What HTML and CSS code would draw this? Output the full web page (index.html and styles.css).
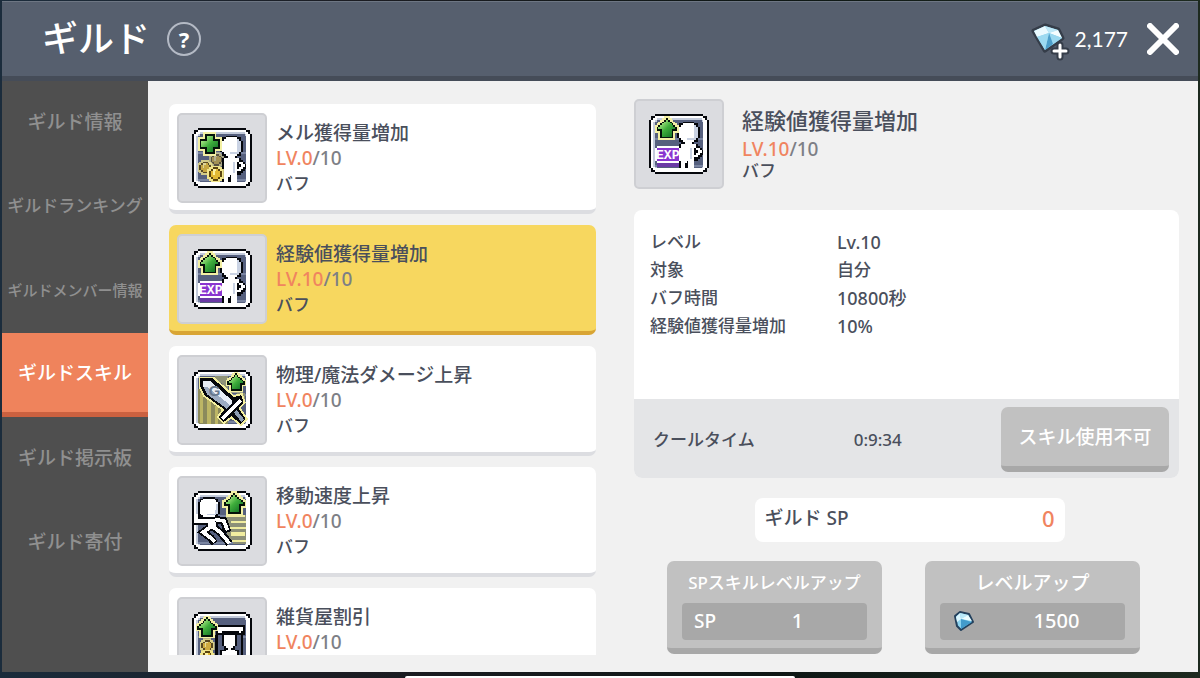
FILE: index.html
```html
<!DOCTYPE html>
<html lang="ja">
<head>
<meta charset="utf-8">
<meta name="viewport" content="width=device-width, initial-scale=1">
<title>ギルド</title>
<link rel="stylesheet" href="styles.css">
</head>
<body>
<svg class="defs" aria-hidden="true">
  <defs>
    <linearGradient id="green" x1="0" y1="0" x2="1" y2="1">
      <stop offset="0.2" stop-color="#9be07a"/><stop offset="0.5" stop-color="#3fae3c"/><stop offset="1" stop-color="#0d6a22"/>
    </linearGradient>
    <symbol id="frame" viewBox="0 0 32 32">
      <path fill="#05070c" d="M3 0H29V1H31V3H32V29H31V31H29V32H3V31H1V29H0V3H1V1H3Z"/>
      <path fill="#fff" d="M3 1H29V2H30V3H31V29H30V30H29V31H3V30H2V29H1V3H2V2H3Z"/>
      <path fill="#c3cbdb" d="M4 2H28V3H29V4H30V28H29V29H28V30H4V29H3V28H2V4H3V3H4Z"/>
      <path fill="#fff" d="M4 29H28V30H4ZM29 4H30V28H29Z"/>
      <path fill="#56607e" d="M4 3H28V4H29V28H28V29H4V28H3V4H4Z"/>
      <path fill="#7984a1" d="M3 13H29V14H3ZM3 27H29V28H3Z"/>
    </symbol>
    <symbol id="hero" viewBox="0 0 32 32">
      <path fill="#05070c" d="M18 4H24V5H26V7H27V13H26V15H24V16H26V17H27V18H28V19H29V22H28V23H27V24H26V25H24V29H16V16H17V15H16V13H15V7H16V5H18Z"/>
      <path fill="#fff" d="M18 5H24V6H25V7H26V13H25V14H24V15H23V16H25V18H27V19H28V21H27V22H26V23H24V29H17V16H19V15H18V14H17V13H16V7H17V6H18Z"/>
      <path fill="#c9d2e3" d="M24 6H25V7H26V13H25V14H20V13H24ZM22 18H23V24H22Z"/>
      <path fill="#05070c" d="M24 18H25V19H26V21H25V22H24ZM20 25H21V29H19V26H20Z"/>
    </symbol>
    <symbol id="arrow" viewBox="0 0 13 13">
      <path fill="#f3f0a4" d="M5 0H8V1H9V2H10V3H11V4H12V5H13V9H11V13H2V9H0V5H1V4H2V3H3V2H4V1H5Z"/>
      <path fill="#05120a" d="M6 1H7V2H8V3H9V4H10V5H11V6H12V8H10V12H3V8H1V6H2V5H3V4H4V3H5V2H6Z"/>
      <path fill="url(#green)" d="M6 2H7V3H8V4H9V5H10V6H11V7H9V11H4V7H2V6H3V5H4V4H5V3H6Z"/>
    </symbol>
    <symbol id="coin" viewBox="0 0 9 9">
      <path fill="#f1e58b" d="M2 0H7V1H8V2H9V7H8V8H7V9H2V8H1V7H0V2H1V1H2Z"/>
      <path fill="#5a4410" d="M3 1H6V2H7V3H8V6H7V7H6V8H3V7H2V6H1V3H2V2H3Z"/>
      <path fill="#e3b935" d="M3 2H6V3H7V6H6V7H3V6H2V3H3Z"/>
      <path fill="#fff2a0" d="M3 2H5V3H4V5H3Z"/>
    </symbol>
    <symbol id="icon-meso" viewBox="0 0 32 32">
      <use href="#frame" width="32" height="32"/>
      <g opacity="0.55"><use href="#coin" x="9" y="13" width="8" height="8"/></g>
      <g opacity="0.8"><use href="#coin" x="3" y="17" width="8" height="8"/></g>
      <use href="#hero" width="32" height="32"/>
      <use href="#coin" x="8" y="20" width="9" height="9"/>
      <path fill="#f3f0a4" d="M6 2H13V5H16V12H13V15H6V12H3V5H6Z"/>
      <path fill="#05120a" d="M7 3H12V6H15V11H12V14H7V11H4V6H7Z"/>
      <path fill="url(#green)" d="M8 4H11V7H14V10H11V13H8V10H5V7H8Z"/>
    </symbol>
    <symbol id="icon-exp" viewBox="0 0 32 32">
      <use href="#frame" width="32" height="32"/>
      <use href="#hero" width="32" height="32"/>
      <use href="#arrow" x="3" y="1" width="13" height="13"/>
      <path fill="#6b3ba6" d="M4 26H16V28H4Z"/>
      <path fill="#fff" d="M4 17H16V18H17V25H16V26H4V25H3V18H4Z"/>
      <path fill="#8a35d0" d="M4 18H16V25H4Z"/>
      <text class="exp-text" x="10" y="24" text-anchor="middle">EXP</text>
    </symbol>
    <symbol id="icon-sword" viewBox="0 0 32 32">
      <use href="#frame" width="32" height="32"/>
      <path fill="#8b8a5c" d="M3 10H5L19 24V29H4L3 28Z"/>
      <path fill="#bdb665" d="M4 12H6V28H4ZM8 15H10V29H8ZM12 19H14V29H12Z"/>
      <path fill="#8f9377" d="M12 3H19V11H16V7H12ZM24 12H28V16H24Z"/>
      <path fill="#05070c" stroke="#f3efa0" stroke-width="3" d="M5 5H11L22 15L26 14L27 17L24 20L28 26L26 28L21 24L17 27L15 25L18 21L7 13L5 9Z"/>
      <path fill="#05070c" stroke="#05070c" stroke-width="1" d="M5 5H11L22 15L26 14L27 17L24 20L28 26L26 28L21 24L17 27L15 25L18 21L7 13L5 9Z"/>
      <path fill="#e8eef6" d="M6 6H10L21 16L22 20L19 21L8 13L6 9Z"/>
      <path fill="#9dacc2" d="M6 9L8 9L22 20L19 21L8 13Z"/>
      <path stroke="#05070c" stroke-width="4" d="M16 26L26 16"/>
      <path stroke="#fff" stroke-width="2" d="M16 26L26 16"/>
      <path stroke="#8c9cb2" stroke-width="2" d="M23 22L27 27"/>
      <text class="g-text" x="12" y="14" text-anchor="middle">G</text>
      <use href="#arrow" x="18" y="1" width="11" height="11"/>
    </symbol>
    <symbol id="icon-speed" viewBox="0 0 32 32">
      <use href="#frame" width="32" height="32"/>
      <path fill="#8d9078" d="M18 13H29V28H22L18 22Z"/>
      <path fill="#f1eda0" d="M18 13H28V14H18ZM21 16H29V17H21ZM20 19H29V20H20ZM21 22H28V24H21ZM20 26H29V27H20Z"/>
      <g fill="none" stroke="#05070c" stroke-width="4">
        <path d="M9 16H2V12M11 15L17 16L19 22M10 19L6 22L10 25L12 28M11 19L15 22L20 28"/>
        <path stroke-width="6" d="M10 13L11 20"/>
      </g>
      <g fill="none" stroke="#fff" stroke-width="2">
        <path d="M9 16H2V12M11 15L17 16L19 21M10 19L6 22L10 25L12 27M11 19L15 22L20 28"/>
        <path stroke-width="4" d="M10 13L11 20"/>
      </g>
      <path fill="#05070c" d="M6 3H12V4H14V6H15V12H14V14H12V15H6V14H4V12H3V6H4V4H6Z"/>
      <path fill="#fff" d="M6 4H12V5H13V6H14V12H13V13H12V14H6V13H5V12H4V6H5V5H6Z"/>
      <path fill="#c5cee0" d="M13 7H14V12H13V13H8V12H12V10H13Z"/>
      <use href="#arrow" x="16" y="0" width="13" height="13"/>
    </symbol>
    <symbol id="icon-shop" viewBox="0 0 32 32">
      <use href="#frame" width="32" height="32"/>
      <path fill="#05070c" d="M13 7H28V12H27V29H12V12H13Z"/>
      <path fill="#fff" d="M14 8H27V10H26V11H25V10H16V11H14Z"/>
      <path fill="#56607e" d="M14 12H26V28H14Z"/>
      <path fill="#05070c" d="M17 11H23V12H24V18H23V20H25V28H15V20H17V18H16V12H17Z"/>
      <path fill="#fff" d="M17 12H23V18H22V19H21V20H23V21H24V28H16V21H18V20H19V19H18V18H17Z"/>
      <use href="#arrow" x="2" y="2" width="12" height="12"/>
      <g opacity="0.85"><use href="#coin" x="4" y="14" width="8" height="8"/></g>
      <use href="#coin" x="4" y="20" width="8" height="8"/>
    </symbol>
  </defs>
</svg>

<div class="window">
  <header class="topbar">
    <h1 class="topbar-title">ギルド</h1>
    <button class="help" type="button" aria-label="ヘルプ">?</button>
    <button class="currency" type="button">
      <svg class="currency-icon" viewBox="0 0 40 38" aria-hidden="true">
        <path fill="#353d49" stroke="#353d49" stroke-width="5" stroke-linejoin="round" d="M2 11L13 6L26 10L30 18L13 30Z"/>
        <path fill="#86cdea" d="M2 11L13 6L26 10L30 18L13 30Z"/>
        <path fill="#eafaff" d="M2 11L13 6L17 13L5 17Z"/>
        <path fill="#bfe9f8" d="M13 6L26 10L17 13Z"/>
        <path fill="#f6feff" d="M26 10L30 18L17 13Z"/>
        <path fill="#9bd9f0" d="M17 13L30 18L20 25Z"/>
        <path fill="#4d9fca" d="M17 13L21 24L13 30Z"/>
        <path fill="#9cdaf1" d="M5 17L17 13L13 30Z"/>
        <path d="M28 25v12M22 31h12" stroke="#353d49" stroke-width="7" stroke-linecap="round"/>
        <path d="M28 25v12M22 31h12" stroke="#fff" stroke-width="3" stroke-linecap="round"/>
      </svg>
      <span>2,177</span>
    </button>
    <button class="close" type="button" aria-label="閉じる">
      <svg class="close-icon" viewBox="0 0 32 32" aria-hidden="true"><path d="M3 3l26 26M29 3L3 29" stroke="#fff" stroke-width="6" stroke-linecap="round"/></svg>
    </button>
  </header>

  <div class="body">
    <nav class="sidebar">
      <a class="tab" href="#info">ギルド情報</a>
      <a class="tab tab-long" href="#ranking">ギルドランキング</a>
      <a class="tab tab-longer" href="#members">ギルドメンバー情報</a>
      <a class="tab tab-active" href="#skills" aria-current="page">ギルドスキル</a>
      <a class="tab" href="#board">ギルド掲示板</a>
      <a class="tab" href="#donate">ギルド寄付</a>
    </nav>

    <main class="content">
      <div class="skill-list">
        <button class="skill" type="button">
          <span class="tile"><svg class="pixel"><use href="#icon-meso"/></svg></span>
          <span class="skill-text"><span class="skill-name">メル獲得量増加</span><span class="level"><b>LV.0</b>/10</span><span class="kind">バフ</span></span>
        </button>
        <button class="skill skill-selected" type="button">
          <span class="tile"><svg class="pixel"><use href="#icon-exp"/></svg></span>
          <span class="skill-text"><span class="skill-name">経験値獲得量増加</span><span class="level"><b>LV.10</b>/10</span><span class="kind">バフ</span></span>
        </button>
        <button class="skill" type="button">
          <span class="tile"><svg class="pixel"><use href="#icon-sword"/></svg></span>
          <span class="skill-text"><span class="skill-name">物理/魔法ダメージ上昇</span><span class="level"><b>LV.0</b>/10</span><span class="kind">バフ</span></span>
        </button>
        <button class="skill" type="button">
          <span class="tile"><svg class="pixel"><use href="#icon-speed"/></svg></span>
          <span class="skill-text"><span class="skill-name">移動速度上昇</span><span class="level"><b>LV.0</b>/10</span><span class="kind">バフ</span></span>
        </button>
        <button class="skill" type="button">
          <span class="tile"><svg class="pixel"><use href="#icon-shop"/></svg></span>
          <span class="skill-text"><span class="skill-name">雑貨屋割引</span><span class="level"><b>LV.0</b>/10</span></span>
        </button>
      </div>

      <section class="detail">
        <div class="detail-head">
          <span class="tile"><svg class="pixel"><use href="#icon-exp"/></svg></span>
          <div class="detail-text">
            <h2 class="detail-name">経験値獲得量増加</h2>
            <span class="level"><b>LV.10</b>/10</span>
            <span class="kind">バフ</span>
          </div>
        </div>

        <div class="card">
          <dl class="stats">
            <dt>レベル</dt><dd class="stat-number">Lv.10</dd>
            <dt>対象</dt><dd>自分</dd>
            <dt>バフ時間</dt><dd class="stat-number">10800秒</dd>
            <dt>経験値獲得量増加</dt><dd class="stat-number">10%</dd>
          </dl>
          <div class="cooldown">
            <span>クールタイム</span>
            <span class="cooldown-time">0:9:34</span>
            <button class="gray-button use-button" type="button">スキル使用不可</button>
          </div>
        </div>

        <div class="guild-sp"><span>ギルド SP</span><span class="guild-sp-value">0</span></div>

        <div class="actions">
          <button class="gray-button action" type="button">
            <span class="action-label action-label-long">SPスキルレベルアップ</span>
            <span class="cost"><span>SP</span><span class="cost-value">1</span></span>
          </button>
          <button class="gray-button action" type="button">
            <span class="action-label">レベルアップ</span>
            <span class="cost">
              <svg class="cost-icon" viewBox="0 0 24 22" aria-hidden="true">
                <path fill="#8bd3f0" stroke="#23405c" stroke-width="2" stroke-linejoin="round" d="M3 6l5-4 9 2 4 8-12 8-4-4z"/>
                <path fill="#dcf7ff" d="M4 7l4-4 1 6-4 3z"/>
                <path fill="#b9eafa" d="M8 3l8 2-7 4z"/>
                <path fill="#eafcff" d="M16 5l4 6-11-2z"/>
                <path fill="#429bcb" d="M9 9l11 3-11 7z"/>
              </svg>
              <span class="cost-value">1500</span>
            </span>
          </button>
        </div>
      </section>
    </main>
  </div>
</div>
<div class="home-indicator"></div>
</body>
</html>
```
FILE: styles.css
```css
* {
  box-sizing: border-box;
}

body {
  margin: 0;
  height: 100vh;
  padding: 1px 2px 6px;
  display: flex;
  flex-direction: column;
  overflow: hidden;
  background: linear-gradient(90deg, #1b2c3c, #1b1c22 30%, #0e1715 65%, #1d2a1f);
  color: #4a4f5c;
  font: 500 17px/28px "Noto Sans", "Noto Sans CJK JP", sans-serif;
}

button {
  margin: 0;
  padding: 0;
  border: 0;
  background: none;
  color: inherit;
  font: inherit;
  cursor: pointer;
}

b {
  font-weight: inherit;
}

.defs {
  position: absolute;
  width: 0;
  height: 0;
}

.window {
  flex: 1;
  min-height: 0;
  display: flex;
  flex-direction: column;
  background: #f1f1f1;
}

/* Top bar */
.topbar {
  height: 80px;
  flex: none;
  display: flex;
  align-items: center;
  padding: 0 19px 0 40px;
  border-top: 1px solid #6d7683;
  border-bottom: 5px solid #454c58;
  background: #565f6e;
  color: #fff;
}

.topbar-title {
  margin: 0;
  font-size: 36px;
  line-height: 48px;
  font-weight: 500;
}

.help {
  width: 34px;
  height: 34px;
  margin-left: 17px;
  border: 2px solid #b4bac5;
  border-radius: 50%;
  font-size: 22px;
  line-height: 28px;
  font-weight: 700;
}

.currency {
  margin-left: auto;
  display: flex;
  align-items: center;
  gap: 3px;
  font: 21px/32px Lato, sans-serif;
}

.currency-icon {
  width: 40px;
  height: 38px;
  fill: none;
  overflow: visible;
}

.close {
  display: flex;
  margin-left: 19px;
}

.close-icon {
  width: 32px;
  height: 32px;
}

/* Side navigation */
.body {
  flex: 1;
  min-height: 0;
  display: flex;
}

.sidebar {
  width: 146px;
  flex: none;
  background: #4f4f4f;
}

.tab {
  height: 84px;
  display: flex;
  align-items: center;
  justify-content: center;
  padding-bottom: 2px;
  color: #909090;
  font-size: 19px;
  text-decoration: none;
  white-space: nowrap;
}

.tab-long {
  font-size: 17px;
}

.tab-longer {
  font-size: 15px;
}

.tab-active {
  padding-bottom: 0;
  border-bottom: 5px solid #cb6140;
  background: #ef835c;
  color: #fff;
}

/* Skill list */
.content {
  flex: 1;
  min-width: 0;
  display: grid;
  grid-template-columns: minmax(0, 427fr) minmax(0, 545fr);
  grid-template-rows: minmax(0, 1fr);
  gap: 38px;
  padding: 18px 19px 17px 21px;
}

.skill-list {
  margin-top: 5px;
  display: flex;
  flex-direction: column;
  gap: 11px;
  overflow: hidden;
}

.skill {
  flex: none;
  height: 110px;
  display: flex;
  align-items: center;
  gap: 9px;
  padding: 2px 8px 0;
  border-bottom: 4px solid #dcdde1;
  border-radius: 7px;
  background: #fff;
  text-align: left;
}

.skill-selected {
  border-bottom-color: #d9a534;
  background: #f7d75f;
}

.tile {
  width: 90px;
  height: 90px;
  flex: none;
  display: grid;
  place-items: center;
  border: 2px solid #cecfd3;
  border-radius: 5px;
  background: #dbdce0;
}

.pixel {
  width: 60px;
  height: 60px;
  shape-rendering: crispEdges;
}

.exp-text {
  fill: #fff;
  font: 700 7px "Liberation Mono", monospace;
}

.g-text {
  fill: #66788f;
  font: 700 8px "Liberation Sans", sans-serif;
}

.skill-text {
  height: 75px;
  display: flex;
  flex-direction: column;
  line-height: 25px;
}

.skill-name {
  font-size: 19px;
}

.level {
  color: #7d7f86;
  font-size: 19px;
}

.level b {
  color: #f0845f;
}

.kind {
  font-size: 17px;
}

/* Skill detail */
.detail {
  display: flex;
  flex-direction: column;
}

.detail-head {
  display: flex;
  gap: 18px;
}

.detail-text {
  display: flex;
  flex-direction: column;
  padding-top: 6px;
  line-height: 21px;
}

.detail-name {
  margin: 0 0 4px;
  font-size: 22px;
  line-height: 30px;
  font-weight: 500;
}

.card {
  margin-top: 21px;
  border-radius: 8px;
  background: #fff;
  overflow: hidden;
}

.stats {
  min-height: 189px;
  margin: 0;
  padding: 18px 16px;
  display: grid;
  grid-template-columns: 187px 1fr;
  align-content: start;
}

.stats dd {
  margin: 0;
}

.stats .stat-number {
  font-size: 18px;
}

.cooldown {
  height: 79px;
  display: flex;
  align-items: center;
  padding: 2px 10px 0 19px;
  background: #e4e5e7;
}

.cooldown-time {
  margin-left: 99px;
}

.gray-button {
  border-bottom: 6px solid #a8a8a8;
  border-radius: 7px;
  background: #c1c1c1;
  color: #fff;
}

.use-button {
  width: 168px;
  height: 65px;
  margin-left: auto;
  font-size: 19px;
}

.guild-sp {
  width: 310px;
  height: 44px;
  margin: 20px 0 0 6px;
  align-self: center;
  display: flex;
  align-items: center;
  justify-content: space-between;
  padding: 0 10px 4px;
  border-radius: 8px;
  background: #fff;
  font-size: 19px;
}

.guild-sp-value {
  color: #f0845f;
  font-size: 22px;
}

.actions {
  margin-top: 19px;
  padding-right: 6px;
  display: flex;
  justify-content: center;
  gap: 43px;
}

.action {
  width: 215px;
  height: 93px;
  display: flex;
  flex-direction: column;
  padding: 8px 15px;
}

.action-label {
  height: 34px;
  align-self: center;
  font-size: 19px;
}

.action-label-long {
  font-size: 17px;
}

.cost {
  align-self: stretch;
  height: 37px;
  display: flex;
  align-items: center;
  padding: 0 12px 2px;
  border-radius: 4px;
  background: #a8a8a8;
  font-size: 19px;
}

.cost-value {
  flex: 1;
  padding-left: 24px;
  font-size: 20px;
}

.cost-icon {
  width: 24px;
  height: 22px;
}

.home-indicator {
  position: absolute;
  left: 50%;
  bottom: 0;
  width: 390px;
  height: 2px;
  transform: translateX(-50%);
  border-radius: 4px 4px 0 0;
  background: #fff;
}
```
